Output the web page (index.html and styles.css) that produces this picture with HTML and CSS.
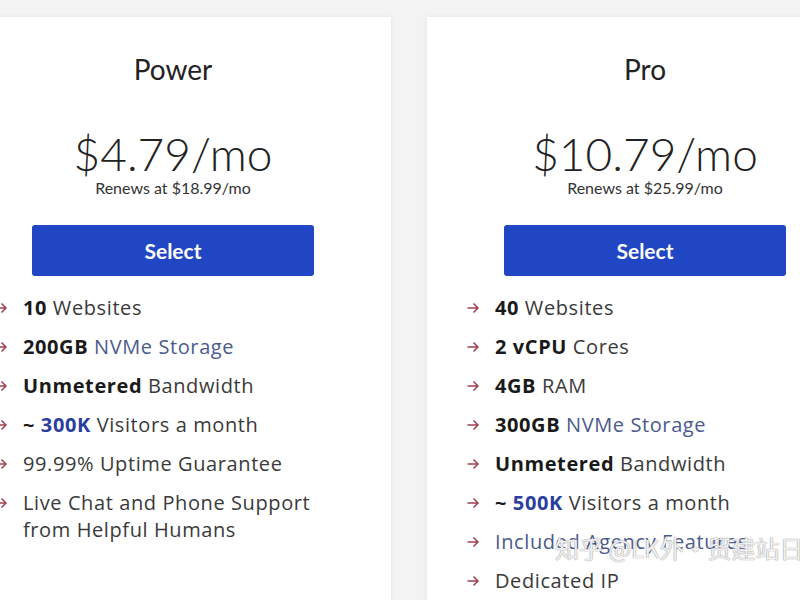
FILE: index.html
```html
<!DOCTYPE html>
<html>
<head>
<meta charset="utf-8">
<link rel="stylesheet" href="styles.css">
</head>
<body>
<div class="plans">
  <div class="card">
    <h2 class="plan-name">Power</h2>
    <div class="price">$4.79/mo</div>
    <div class="renew">Renews at $18.99/mo</div>
    <button class="select">Select</button>
    <ul class="features">
      <li><svg class="arrow" viewBox="0 0 12 12"><path d="M0.5 6H11M6.5 1.5L11 6L6.5 10.5"/></svg><span><b>10</b> Websites</span></li>
      <li><svg class="arrow" viewBox="0 0 12 12"><path d="M0.5 6H11M6.5 1.5L11 6L6.5 10.5"/></svg><span><b>200GB</b> <span class="link">NVMe Storage</span></span></li>
      <li><svg class="arrow" viewBox="0 0 12 12"><path d="M0.5 6H11M6.5 1.5L11 6L6.5 10.5"/></svg><span><b>Unmetered</b> Bandwidth</span></li>
      <li><svg class="arrow" viewBox="0 0 12 12"><path d="M0.5 6H11M6.5 1.5L11 6L6.5 10.5"/></svg><span><b>~</b> <b class="hl">300K</b> Visitors a month</span></li>
      <li><svg class="arrow" viewBox="0 0 12 12"><path d="M0.5 6H11M6.5 1.5L11 6L6.5 10.5"/></svg><span>99.99% Uptime Guarantee</span></li>
      <li><svg class="arrow" viewBox="0 0 12 12"><path d="M0.5 6H11M6.5 1.5L11 6L6.5 10.5"/></svg><span>Live Chat and Phone Support<br>from Helpful Humans</span></li>
    </ul>
  </div>
  <div class="card">
    <h2 class="plan-name">Pro</h2>
    <div class="price">$10.79/mo</div>
    <div class="renew">Renews at $25.99/mo</div>
    <button class="select">Select</button>
    <ul class="features">
      <li><svg class="arrow" viewBox="0 0 12 12"><path d="M0.5 6H11M6.5 1.5L11 6L6.5 10.5"/></svg><span><b>40</b> Websites</span></li>
      <li><svg class="arrow" viewBox="0 0 12 12"><path d="M0.5 6H11M6.5 1.5L11 6L6.5 10.5"/></svg><span><b>2 vCPU</b> Cores</span></li>
      <li><svg class="arrow" viewBox="0 0 12 12"><path d="M0.5 6H11M6.5 1.5L11 6L6.5 10.5"/></svg><span><b>4GB</b> RAM</span></li>
      <li><svg class="arrow" viewBox="0 0 12 12"><path d="M0.5 6H11M6.5 1.5L11 6L6.5 10.5"/></svg><span><b>300GB</b> <span class="link">NVMe Storage</span></span></li>
      <li><svg class="arrow" viewBox="0 0 12 12"><path d="M0.5 6H11M6.5 1.5L11 6L6.5 10.5"/></svg><span><b>Unmetered</b> Bandwidth</span></li>
      <li><svg class="arrow" viewBox="0 0 12 12"><path d="M0.5 6H11M6.5 1.5L11 6L6.5 10.5"/></svg><span><b>~</b> <b class="hl">500K</b> Visitors a month</span></li>
      <li><svg class="arrow" viewBox="0 0 12 12"><path d="M0.5 6H11M6.5 1.5L11 6L6.5 10.5"/></svg><span class="link">Included Agency Features</span></li>
      <li><svg class="arrow" viewBox="0 0 12 12"><path d="M0.5 6H11M6.5 1.5L11 6L6.5 10.5"/></svg><span>Dedicated IP</span></li>
    </ul>
  </div>
</div>
<div class="watermark">知乎 @LK外·贸建站日</div>
</body>
</html>
```

FILE: styles.css
```css
html, body {
  margin: 0;
  padding: 0;
  width: 800px;
  height: 600px;
  overflow: hidden;
  background: #f3f3f3;
}
.plans {
  display: flex;
  gap: 36px;
  margin-left: -45px;
  padding-top: 17px;
}
.card {
  flex: 0 0 436px;
  width: 436px;
  height: 640px;
  background: #fff;
  box-shadow: 0 0 6px rgba(0,0,0,0.06);
  display: flex;
  flex-direction: column;
  align-items: center;
}
.plan-name {
  margin: 35px 0 0;
  font-family: "Lato", "Inter", sans-serif;
  font-weight: 400;
  font-size: 28px;
  line-height: 34px;
  color: #222;
}
.price {
  margin-top: 44px;
  font-family: "Lato", sans-serif;
  font-weight: 300;
  font-size: 46px;
  line-height: 48px;
  color: #222;
}
.renew {
  margin-top: 0;
  font-family: "Lato", sans-serif;
  font-size: 16px;
  line-height: 20px;
  color: #333;
}
.select {
  margin-top: 27px;
  width: 282px;
  height: 51px;
  border: none;
  border-radius: 3px;
  background: #2146c4;
  color: #fff;
  font-family: "Lato", sans-serif;
  font-weight: 700;
  font-size: 21px;
  cursor: pointer;
}
.features {
  list-style: none;
  margin: 18px 0 0;
  padding: 0 0 0 40px;
  align-self: stretch;
  font-family: "Open Sans", sans-serif;
  font-size: 20px;
  letter-spacing: 0.6px;
  color: #3a3a3a;
}
.features li {
  display: flex;
  align-items: flex-start;
  gap: 16px;
  line-height: 27px;
  margin-bottom: 12px;
}
.arrow {
  flex: 0 0 12px;
  width: 12px;
  height: 12px;
  margin-top: 8px;
  fill: none;
  stroke: #a2404f;
  stroke-width: 1.5;
}
.features b {
  font-weight: 700;
  color: #1a1a1a;
}
.features b.hl {
  color: #2a3e9e;
}
.link {
  color: #4b5a8e;
}
.watermark {
  position: absolute;
  left: 555px;
  top: 530px;
  font-family: "Noto Sans CJK SC", sans-serif;
  font-size: 24px;
  color: rgba(255,255,255,0.85);
  text-shadow: 0 0 1px #999, 0 0 1px #999;
  white-space: nowrap;
}
```
